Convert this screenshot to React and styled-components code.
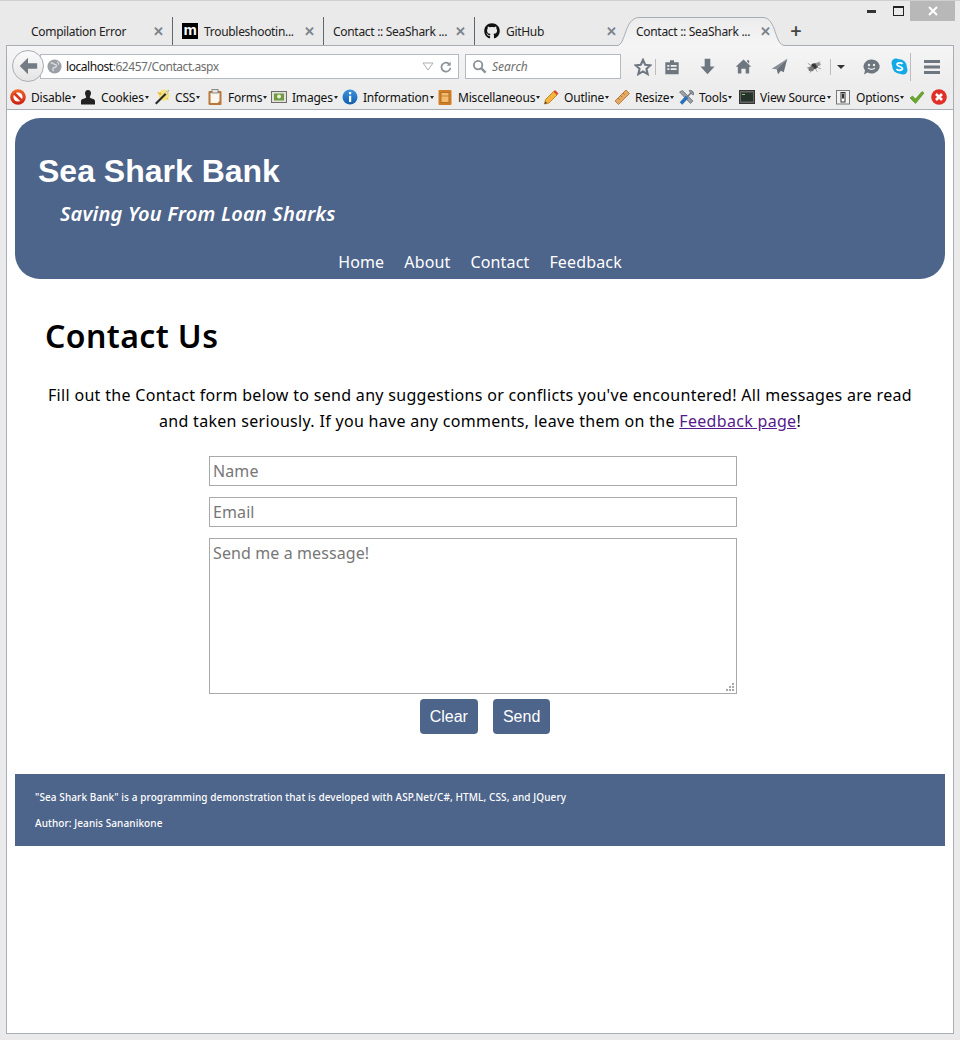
import styled, { createGlobalStyle } from "styled-components";
import { FaGithub } from "react-icons/fa";

const brand = "#4d648b";
const chromeFont = `"Noto Sans", "Open Sans", sans-serif`;
const bodyFont = `"Noto Sans", "DejaVu Sans", sans-serif`;

const Global = createGlobalStyle`
  html, body { margin: 0; padding: 0; background: #fff; }
  * { box-sizing: border-box; }
`;

const Frame = styled.div`
  width: 960px;
  height: 1040px;
  display: flex;
  flex-direction: column;
  background: #eaeaea;
  padding: 0 6px 6px;
  border-top: 1px solid #cfcfcf;
  font-family: ${chromeFont};
  overflow: hidden;
`;
const TitleBar = styled.div`
  height: 16px;
  display: flex;
  justify-content: flex-end;
  align-items: flex-start;
  flex-shrink: 0;
  margin-right: -1px;
`;
const Caption = styled.div`
  width: ${(p) => p.$w}px;
  height: 20px;
  display: flex;
  align-items: center;
  justify-content: center;
  background: ${(p) => (p.$close ? "#b8b8b8" : "transparent")};
  position: relative;
  z-index: 2;
`;
const TabStrip = styled.div`
  height: 28px;
  display: flex;
  align-items: stretch;
  padding-left: 16px;
  flex-shrink: 0;
  position: relative;
  z-index: 1;
`;
const Tab = styled.div`
  width: 151px;
  flex-shrink: 0;
  display: flex;
  align-items: center;
  padding: 0 9px;
  border-right: 1px solid ${(p) => (p.$last ? "transparent" : "#5e6670")};
  font-size: 12px;
  letter-spacing: -0.3px;
  color: #222;
  gap: 6px;
  white-space: nowrap;
`;
const ActiveTab = styled(Tab)`
  width: 155px;
  height: 29px;
  margin-left: -2px;
  padding: 0 9px 1px 12px;
  border: none;
  position: relative;
  z-index: 1;
  & > * { position: relative; }
`;
const TabShape = styled.svg`
  position: absolute !important;
  left: -7px;
  top: 0;
`;
const TabTitle = styled.span`
  flex: 1;
`;
const TabClose = styled.span`
  color: #7a828c;
  font-size: 13px;
  font-weight: 700;
  line-height: 1;
  margin-right: -1px;
`;
const FavM = styled.span`
  width: 16px;
  height: 16px;
  background: #000;
  color: #fff;
  font-family: "Liberation Sans", sans-serif;
  font-weight: 700;
  font-size: 15px;
  line-height: 14px;
  text-align: center;
  flex-shrink: 0;
`;
const NewTab = styled.span`
  font-size: 20px;
  font-weight: 600;
  color: #444;
  width: 34px;
  text-align: center;
  line-height: 28px;
  position: relative;
  z-index: 1;
`;
const NavBar = styled.div`
  height: 40px;
  flex-shrink: 0;
  border: 1px solid #a8adb3;
  border-bottom: none;
  background: linear-gradient(#f5f5f5, #ededed);
  display: flex;
  align-items: center;
  padding: 2px 0 0 33px;
  position: relative;
`;
const BackButton = styled.div`
  position: absolute;
  left: 5px;
  top: 4px;
  width: 32px;
  height: 32px;
  border-radius: 50%;
  background: linear-gradient(#fbfbfb, #e4e4e4);
  border: 1px solid #a9aeb4;
  display: flex;
  align-items: center;
  justify-content: center;
  z-index: 1;
`;
const UrlBox = styled.div`
  width: 419px;
  height: 25px;
  flex-shrink: 0;
  background: #fff;
  border: 1px solid #b4bac0;
  display: flex;
  align-items: center;
  padding-left: 6px;
  font-size: 12px;
  letter-spacing: -0.45px;
  gap: 4px;
`;
const UrlText = styled.span`
  flex: 1;
  color: #111;
  span { color: #6d6d6d; }
`;
const Reload = styled.span`
  width: 17px;
  margin-right: 3px;
  display: flex;
`;
const SearchBox = styled.div`
  width: 156px;
  height: 25px;
  flex-shrink: 0;
  margin-left: 6px;
  background: #fff;
  border: 1px solid #b4bac0;
  display: flex;
  align-items: center;
  padding-left: 6px;
  gap: 5px;
  font-size: 12px;
  font-style: italic;
  color: #6d6d6d;
`;
const Tools = styled.div`
  display: flex;
  align-items: center;
  margin-left: 9px;
`;
const ToolSlot = styled.div`
  width: ${(p) => p.$w}px;
  height: 30px;
  display: flex;
  align-items: center;
  justify-content: center;
  flex-shrink: 0;
`;
const Divider = styled.div`
  width: 1px;
  flex-shrink: 0;
  height: ${(p) => p.$h || 16}px;
  background: #b9bdc2;
`;
const LinkBar = styled.div`
  height: 25px;
  flex-shrink: 0;
  border: 1px solid #a8adb3;
  border-width: 0 1px 1px;
  background: #ededed;
  display: flex;
  align-items: center;
  padding-left: 3px;
`;
const LinkItem = styled.div`
  width: ${(p) => p.$w}px;
  display: flex;
  align-items: center;
  gap: 5px;
  font-size: 12px;
  letter-spacing: -0.2px;
  color: #111;
  white-space: nowrap;
  flex-shrink: 0;
  &::after {
    content: "";
    display: ${(p) => (p.$plain ? "none" : "block")};
    margin-left: -4px;
    border: 2px solid transparent;
    border-top: 3px solid #222;
    border-bottom: none;
  }
`;
const Viewport = styled.main`
  flex: 1;
  background: #fff;
  border: 1px solid #a8adb3;
  border-top: none;
  padding: 8px 8px 0;
  min-height: 0;
`;
const Banner = styled.header`
  height: 161px;
  background: ${brand};
  border-radius: 25px;
  color: #fff;
  display: flex;
  flex-direction: column;
  padding: 33px 23px 0;
`;
const BankName = styled.h1`
  margin: 0;
  font: 700 32px/40px "Liberation Sans", sans-serif;
`;
const Tagline = styled.div`
  margin: 10px 0 0 22px;
  font: italic 600 20px/26px ${bodyFont};
  letter-spacing: 0.2px;
`;
const Menu = styled.nav`
  margin: 23px -23px 0;
  display: flex;
  justify-content: center;
  gap: 20px;
  font: 400 16px/24px ${bodyFont};
  letter-spacing: 0.15px;
`;
const MenuLink = styled.span``;
const Content = styled.section`
  padding: 0 30px;
`;
const PageTitle = styled.h2`
  margin: 37px 0 0;
  font: 600 32px/40px ${bodyFont};
  letter-spacing: 0.4px;
  color: #000;
`;
const Intro = styled.p`
  margin: 26px 0 0;
  text-align: center;
  font: 400 16px/26px ${bodyFont};
  letter-spacing: 0.31px;
  color: #000;
  a { color: #551a8b; }
`;
const Form = styled.form`
  width: 528px;
  margin: 22px auto 0 164px;
  display: flex;
  flex-direction: column;
  gap: 11px;
`;
const Field = styled.input`
  height: 30px;
  flex-shrink: 0;
  border: 1px solid #a9a9a9;
  padding: 0 3px;
  font: 400 16px ${bodyFont};
  letter-spacing: 0.1px;
  &::placeholder { color: #777; opacity: 1; }
`;
const MessageWrap = styled.div`
  position: relative;
  height: 156px;
`;
const Message = styled.textarea`
  width: 100%;
  height: 100%;
  border: 1px solid #a9a9a9;
  padding: 2px 3px;
  font: 400 16px/24px ${bodyFont};
  letter-spacing: 0.1px;
  resize: none;
  display: block;
  &::placeholder { color: #777; opacity: 1; }
`;
const Grip = styled.svg`
  position: absolute;
  right: 2px;
  bottom: 2px;
`;
const Buttons = styled.div`
  display: flex;
  justify-content: center;
  gap: 15px;
  margin: -6px 0 0;
  padding-left: 24px;
`;
const Button = styled.button`
  height: 35px;
  padding: 0 10px;
  border: none;
  border-radius: 4px;
  background: ${brand};
  color: #fff;
  font: 400 16px "Liberation Sans", sans-serif;
`;
const Footer = styled.footer`
  margin-top: 40px;
  height: 72px;
  background: ${brand};
  color: #fff;
  padding: 16px 20px 0;
  font: 500 10px/14px ${bodyFont};
  letter-spacing: 0.09px;
  display: flex;
  flex-direction: column;
  gap: 12px;
`;

const G = "#6e7680";

const Close = () => <TabClose>✕</TabClose>;

function Icon({ d, fill = G, size = 18, box = 24, stroke, weight = 2 }) {
  return (
    <svg width={size} height={size} viewBox={`0 0 ${box} ${box}`}>
      <path d={d} fill={fill} stroke={stroke} strokeWidth={stroke ? weight : 0} fillRule="evenodd" />
    </svg>
  );
}

const LINK_ICONS = {
  disable: (
    <>
      <defs>
        <linearGradient id="redDisc" x1="0" y1="0" x2="0" y2="1">
          <stop offset="0" stopColor="#f0682a" />
          <stop offset="1" stopColor="#c81e14" />
        </linearGradient>
      </defs>
      <circle cx="8" cy="8" r="7.800" fill="url(#redDisc)" />
      <circle cx="8" cy="8" r="4.600" fill="#fff" />
      <path d="M4.500 4.500l7 7" stroke="#d9341a" strokeWidth="2.600" />
    </>
  ),
  cookies: <path d="M8 1c2 0 3 1.400 3 3.200 0 2-1.200 2.600-1.200 4.300 0 1 5.200 1 5.200 3.500v3.500H1v-3.500c0-2.500 5.200-2.500 5.200-3.500C6.200 6.800 5 6.200 5 4.200 5 2.400 6 1 8 1z" fill="#222" />,
  css: (
    <>
      <circle cx="10" cy="6" r="5.500" fill="#f6e27a" />
      <path d="M1 14L11 4l1.500 1.500-10 10z" fill="#2a2a2a" />
      <path d="M11 4l1.500 1.500L15 1z" fill="#fff" stroke="#888" strokeWidth="0.500" />
      <path d="M4 3l1 2 2-1-1 2M13 9l1 1.500" stroke="#e8a92a" fill="none" />
    </>
  ),
  forms: (
    <>
      <rect x="1.500" y="2" width="13" height="14" rx="1" fill="#b9773a" />
      <path d="M3.500 4h9v8l-2 2h-7z" fill="#fbf7ee" />
      <rect x="5" y="0.500" width="6" height="3.500" fill="#e4e4e4" stroke="#777" strokeWidth="0.800" />
    </>
  ),
  images: (
    <>
      <rect x="0.500" y="2.500" width="15" height="11" fill="#e2e4da" stroke="#6d6d6d" />
      <rect x="3" y="4.500" width="10" height="7" fill="#6f9b46" />
      <circle cx="8" cy="7.500" r="2" fill="#f2efcf" />
    </>
  ),
  info: (
    <>
      <defs>
        <linearGradient id="blueDisc" x1="0" y1="0" x2="0" y2="1">
          <stop offset="0" stopColor="#3c93de" />
          <stop offset="1" stopColor="#125fae" />
        </linearGradient>
      </defs>
      <circle cx="8" cy="8" r="7.500" fill="url(#blueDisc)" />
      <path d="M7 3h2.200v2.200H7zM7 6.800h2.200V13H7z" fill="#fff" />
    </>
  ),
  misc: (
    <>
      <rect x="1.500" y="1" width="13" height="15" rx="1" fill="#d07f28" />
      <rect x="4" y="3.500" width="8" height="10" fill="#f2bb6e" stroke="#b96e1e" />
      <path d="M4 7h8" stroke="#c98436" />
    </>
  ),
  outline: (
    <>
      <path d="M1.500 15l1-4.500 8-8 3.500 3.500-8 8z" fill="#f4b53c" stroke="#b5761c" strokeWidth="0.800" />
      <path d="M1.500 15l1-2.500 1.500 1.500z" fill="#333" />
      <path d="M10.500 2.500l3.500 3.500 1.500-1.500L12 1z" fill="#d9482f" />
    </>
  ),
  resize: (
    <>
      <path d="M1 12L12 1l3.500 3.500-11 11z" fill="#e3a862" stroke="#b0702a" strokeWidth="0.800" />
      <path d="M4 9l1.500 1.500M6.500 6.500L8 8M9 4l1.500 1.500" stroke="#9c6226" strokeWidth="0.800" />
    </>
  ),
  tools: (
    <>
      <path d="M1.500 3l3-1.500L15 12l-2.500 2.500z" fill="#9aa0a6" stroke="#555" strokeWidth="0.600" />
      <path d="M3 14.500L9 8" stroke="#2a6fb8" strokeWidth="3.400" />
      <path d="M9 8l4-4" stroke="#777" strokeWidth="1.600" />
      <path d="M11 1.500a3.500 3.500 0 0 1 4.500 4.500l-2-1-1-1z" fill="#8f959b" stroke="#555" strokeWidth="0.500" />
    </>
  ),
  source: (
    <>
      <rect x="0.500" y="1.500" width="15" height="13" fill="#666" stroke="#333" />
      <rect x="2" y="3.500" width="12" height="9" fill="#26332a" />
      <path d="M3 5.500h3" stroke="#7fd07f" />
    </>
  ),
  options: (
    <>
      <rect x="1.500" y="1.500" width="13" height="13.500" fill="#f2f2f2" stroke="#777" />
      <rect x="6" y="3.500" width="4" height="9.500" fill="#fff" stroke="#333" />
      <rect x="7" y="4.500" width="2" height="5" fill="#333" />
    </>
  ),
  check: <path d="M1 9l2.500-2 3 3L13 2.500l2 1.500-8.500 10.500z" fill="#6aa82a" stroke="#3f7a12" strokeWidth="0.500" />,
  cross: (
    <>
      <circle cx="8" cy="8" r="7.800" fill="#df2f28" />
      <path d="M5 5l6 6M11 5l-6 6" stroke="#fff" strokeWidth="2.600" />
    </>
  ),
};

const LinkIcon = ({ name }) => (
  <svg width="16" height="16" viewBox="0 0 16 16" style={{ flexShrink: 0 }}>
    {LINK_ICONS[name]}
  </svg>
);

const LINKS = [
  ["disable", "Disable", 70],
  ["cookies", "Cookies", 74],
  ["css", "CSS", 53],
  ["forms", "Forms", 64],
  ["images", "Images", 71],
  ["info", "Information", 95],
  ["misc", "Miscellaneous", 106],
  ["outline", "Outline", 71],
  ["resize", "Resize", 64],
  ["tools", "Tools", 61],
  ["source", "View Source", 96],
  ["options", "Options", 74],
];

export default function App() {
  return (
    <Frame>
      <Global />
      <TitleBar>
        <Caption $w={30}>
          <svg width="9" height="3"><rect width="9" height="3" fill="#333" /></svg>
        </Caption>
        <Caption $w={24}>
          <svg width="11" height="10"><rect x="0.500" y="0.500" width="10" height="9" fill="none" stroke="#222" /><rect width="11" height="2" fill="#222" /></svg>
        </Caption>
        <Caption $w={45} $close>
          <svg width="10" height="10"><path d="M1 1l8 8M9 1L1 9" stroke="#fff" strokeWidth="2" /></svg>
        </Caption>
      </TitleBar>
      <TabStrip>
        <Tab><TabTitle>Compilation Error</TabTitle><Close /></Tab>
        <Tab><FavM>m</FavM><TabTitle>Troubleshootin...</TabTitle><Close /></Tab>
        <Tab><TabTitle>Contact :: SeaShark ...</TabTitle><Close /></Tab>
        <Tab $last><FaGithub size={16} color="#111" /><TabTitle>GitHub</TabTitle><Close /></Tab>
        <ActiveTab>
          <TabShape width="168" height="29" viewBox="0 0 168 29">
            <defs>
              <linearGradient id="tabFill" x1="0" y1="0" x2="0" y2="1">
                <stop offset="0" stopColor="#ececec" />
                <stop offset="1" stopColor="#f5f5f5" />
              </linearGradient>
            </defs>
            <path d="M0 28.500C9 28.500 7 1 22 0.500H146C160 1 157 28.500 168 28.500V29H0z" fill="url(#tabFill)" />
            <path d="M0 28.500C9 28.500 7 1 22 0.500H146C160 1 157 28.500 168 28.500" fill="none" stroke="#a8adb3" />
          </TabShape>
          <TabTitle>Contact :: SeaShark ...</TabTitle>
          <Close />
        </ActiveTab>
        <NewTab>+</NewTab>
      </TabStrip>
      <NavBar>
        <BackButton>
          <Icon d="M12 3L3 12l9 9v-6h10V9H12z" size={22} fill="#737b84" />
        </BackButton>
        <UrlBox>
          <svg width="15" height="15" viewBox="0 0 16 16">
            <circle cx="8" cy="8" r="7.500" fill="#9aa0a6" />
            <path d="M4 4c3 0 3 2 5 2s1 3-1 3-2 2-1 4M11 3c1 1 2 2 1 3" stroke="#d8dadc" fill="none" strokeWidth="1.500" />
          </svg>
          <UrlText>localhost<span>:62457/Contact.aspx</span></UrlText>
          <svg width="12" height="9"><path d="M1 1h10L6 8z" fill="#fff" stroke="#aab0b6" /></svg>
          <Reload>
            <Icon d="M19 4v6h-6l2.300-2.300A5.500 5.500 0 1 0 17.500 13h2.400A8 8 0 1 1 17 6z" fill="#8a929a" size={16} />
          </Reload>
        </UrlBox>
        <SearchBox>
          <svg width="15" height="15" viewBox="0 0 16 16"><circle cx="6.500" cy="6.500" r="4.500" fill="none" stroke="#8a929a" strokeWidth="2" /><path d="M10 10l4.500 4.500" stroke="#8a929a" strokeWidth="2.500" /></svg>
          Search
        </SearchBox>
        <Tools>
          <ToolSlot $w={25}>
            <Icon d="M12 2.500l2.900 6.500 7 .7-5.300 4.700 1.600 7L12 17.800l-6.200 3.600 1.600-7L2.100 9.700l7-.7z" fill="none" stroke={G} weight={2.800} size={18} />
          </ToolSlot>
          <Divider />
          <ToolSlot $w={32}>
            <Icon d="M2 5h7V2h6v3h7v18H2zM5 9v2.500h3V9zm5 0v2.500h9V9zm-5 5v2.500h3V14zm5 0v2.500h9V14z" size={16} />
          </ToolSlot>
          <ToolSlot $w={38}>
            <Icon d="M8 1h8v11h6L12 23 2 12h6z" size={17} />
          </ToolSlot>
          <ToolSlot $w={34}>
            <Icon d="M12 2l11 10.500h-3V22h-5v-7H9v7H4v-9.500H1zM17 3h3v5l-3-3z" size={17} />
          </ToolSlot>
          <ToolSlot $w={38}>
            <svg width="17" height="17" viewBox="0 0 24 24">
              <path d="M23 1L1 15l7 1z" fill="#868d95" />
              <path d="M23 1L8 16l2 7 4-5 4 2z" fill="#6a727b" />
            </svg>
          </ToolSlot>
          <ToolSlot $w={32}>
            <svg width="16" height="14" viewBox="0 0 17 14">
              <ellipse cx="9" cy="6" rx="3.500" ry="3" fill="#3a3a3a" />
              <ellipse cx="5.500" cy="9" rx="3" ry="2.500" fill="#777" />
              <ellipse cx="13" cy="4" rx="2.500" ry="2" fill="#9a9a9a" />
              <path d="M2 3l4 3M15 1l-4 4M1 8l4-1M16 9l-5-2M4 13l2-3M12 12l-2-3" stroke="#888" strokeWidth="0.800" />
            </svg>
          </ToolSlot>
          <Divider />
          <ToolSlot $w={19}>
            <svg width="8" height="4"><path d="M0 0h8L4 4z" fill="#333" /></svg>
          </ToolSlot>
          <ToolSlot $w={42}>
            <svg width="17" height="16" viewBox="0 0 17 16">
              <path d="M8.500 0.500a8 7 0 1 1-4 13l-3.500 2 1-4a8 7 0 0 1 6.500-11z" fill={G} />
              <circle cx="6" cy="6" r="1.200" fill="#eee" /><circle cx="11" cy="6" r="1.200" fill="#eee" />
              <path d="M5 9c2 1.500 5 1.500 7 0" stroke="#eee" fill="none" strokeWidth="1.200" />
            </svg>
          </ToolSlot>
          <ToolSlot $w={14}>
            <svg width="17" height="17" viewBox="0 0 17 17" style={{ flexShrink: 0 }}>
              <circle cx="5" cy="5" r="4.500" fill="#12a9e6" /><circle cx="12" cy="12" r="4.500" fill="#12a9e6" /><circle cx="8.500" cy="8.500" r="7.200" fill="#12a9e6" />
              <path d="M11.500 6C10.500 4.500 6 4.500 6 6.500S11.500 8.500 11.500 10.500 7 13 5.500 11" fill="none" stroke="#fff" strokeWidth="1.800" />
            </svg>
          </ToolSlot>
          <ToolSlot $w={4} />
          <Divider $h={28} />
          <ToolSlot $w={42}>
            <svg width="16" height="14"><path d="M0 0h16v3H0zM0 5.500h16v3H0zM0 11h16v3H0z" fill={G} /></svg>
          </ToolSlot>
        </Tools>
      </NavBar>
      <LinkBar>
        {LINKS.map(([icon, label, w]) => (
          <LinkItem key={label} $w={w}><LinkIcon name={icon} />{label}</LinkItem>
        ))}
        <LinkItem $w={22} $plain><LinkIcon name="check" /></LinkItem>
        <LinkItem $w={16} $plain><LinkIcon name="cross" /></LinkItem>
      </LinkBar>
      <Viewport>
        <Banner>
          <BankName>Sea Shark Bank</BankName>
          <Tagline>Saving You From Loan Sharks</Tagline>
          <Menu>
            <MenuLink>Home</MenuLink>
            <MenuLink>About</MenuLink>
            <MenuLink>Contact</MenuLink>
            <MenuLink>Feedback</MenuLink>
          </Menu>
        </Banner>
        <Content>
          <PageTitle>Contact Us</PageTitle>
          <Intro>
            Fill out the Contact form below to send any suggestions or conflicts you've encountered! All messages are read and taken seriously. If you have any comments, leave them on the <a href="#feedback">Feedback page</a>!
          </Intro>
          <Form>
            <Field placeholder="Name" />
            <Field placeholder="Email" />
            <MessageWrap>
              <Message placeholder="Send me a message!" />
              <Grip width="9" height="9" viewBox="0 0 9 9">
                <path d="M6 0h2v2H6zM3 3h2v2H3zM6 3h2v2H6zM0 6h2v2H0zM3 6h2v2H3zM6 6h2v2H6z" fill="#a8a8a8" />
              </Grip>
            </MessageWrap>
            <Buttons>
              <Button type="button">Clear</Button>
              <Button type="button">Send</Button>
            </Buttons>
          </Form>
        </Content>
        <Footer>
          <div>"Sea Shark Bank" is a programming demonstration that is developed with ASP.Net/C#, HTML, CSS, and JQuery</div>
          <div>Author: Jeanis Sananikone</div>
        </Footer>
      </Viewport>
    </Frame>
  );
}
